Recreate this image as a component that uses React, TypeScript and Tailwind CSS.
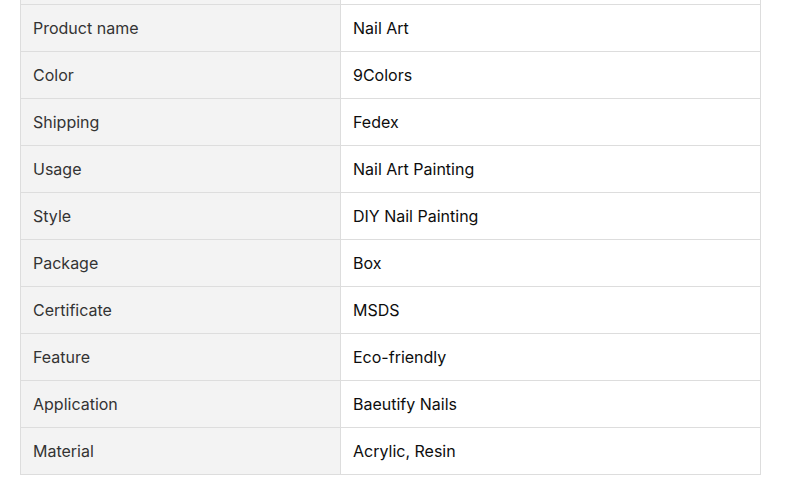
const specs: [string, string][] = [
  ["Product name", "Nail Art"],
  ["Color", "9Colors"],
  ["Shipping", "Fedex"],
  ["Usage", "Nail Art Painting"],
  ["Style", "DIY Nail Painting"],
  ["Package", "Box"],
  ["Certificate", "MSDS"],
  ["Feature", "Eco-friendly"],
  ["Application", "Baeutify Nails"],
  ["Material", "Acrylic, Resin"],
];

export default function App() {
  return (
    <div className="h-[499px] w-[797px] overflow-hidden bg-white font-['Inter',sans-serif] text-[16px]">
      <div className="ml-[20px] w-[741px] border-x border-[#dddddd]">
        {/* tail of the row scrolled out above */}
        <div className="flex h-[5px] border-b border-[#dddddd]">
          <div className="w-[320px] border-r border-[#dddddd] bg-[#f3f3f3]" />
          <div className="flex-1" />
        </div>
        {specs.map(([label, value]) => (
          <div key={label} className="flex h-[47px] border-b border-[#dddddd]">
            <div className="flex w-[320px] items-center border-r border-[#dddddd] bg-[#f3f3f3] px-3 text-[#333333]">
              {label}
            </div>
            <div className="flex flex-1 items-center px-3 font-normal text-[#0d0d0d]">{value}</div>
          </div>
        ))}
      </div>
    </div>
  );
}
